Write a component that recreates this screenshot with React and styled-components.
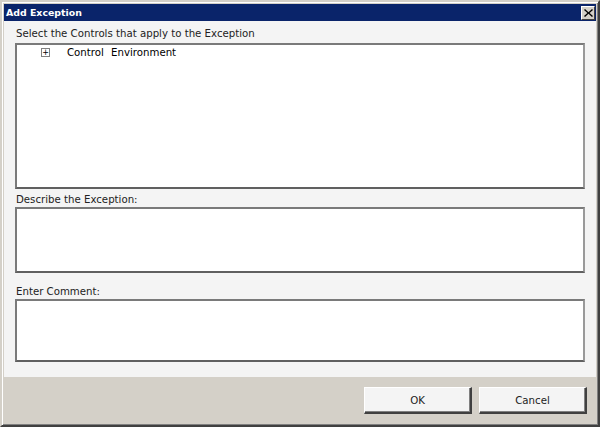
import React from "react";
import styled, { createGlobalStyle } from "styled-components";

const GlobalStyle = createGlobalStyle`
  html, body {
    margin: 0;
    padding: 0;
    background: #ffffff;
  }
  body {
    font-family: "DejaVu Sans", Tahoma, sans-serif;
    font-size: 10.2px;
    color: #000;
  }
`;

const App = () => {
  return (
    <>
      <GlobalStyle />
      <Window>
        <TitleBar>
          <Title>Add Exception</Title>
          <CloseButton aria-label="Close">
            <svg width="9" height="8" viewBox="0 0 9 8">
              <path d="M1 0 L4.5 3.2 L8 0 L9 1 L5.6 4 L9 7 L8 8 L4.5 4.8 L1 8 L0 7 L3.4 4 L0 1 Z" fill="#000" />
            </svg>
          </CloseButton>
        </TitleBar>
        <Body>
          <Label lh={10}>Select the Controls that apply to the Exception</Label>
          <Field height={146}>
            <TreeRow>
              <Expander>+</Expander>
              <TreeText>Control Environment</TreeText>
            </TreeRow>
          </Field>
          <Label top={4}>Describe the Exception:</Label>
          <Field height={66} />
          <Label top={12}>Enter Comment:</Label>
          <Field height={63} />
        </Body>
        <Footer>
          <Button>OK</Button>
          <Button>Cancel</Button>
        </Footer>
      </Window>
    </>
  );
};

export default App;

const Window = styled.div`
  width: 600px;
  height: 427px;
  box-sizing: border-box;
  border-top: 2px solid #d4d0c8;
  border-left: 2px solid #d4d0c8;
  border-right: 2px solid #404040;
  border-bottom: 2px solid #404040;
  box-shadow: inset 1px 1px 0 #ffffff, inset -1px -1px 0 #808080;
  background: #d4d0c8;
  padding: 2px;
  display: flex;
  flex-direction: column;
`;

const TitleBar = styled.div`
  height: 17px;
  background: #0a246a;
  display: flex;
  align-items: center;
  justify-content: space-between;
  padding: 0 1px 0 2px;
`;

const Title = styled.div`
  color: #ffffff;
  font-weight: bold;
  font-size: 9.4px;
`;

const CloseButton = styled.div`
  width: 14px;
  height: 14px;
  box-sizing: border-box;
  background: #d4d0c8;
  border-top: 1px solid #ffffff;
  border-left: 1px solid #ffffff;
  border-right: 1px solid #404040;
  border-bottom: 1px solid #404040;
  display: flex;
  align-items: center;
  justify-content: center;
`;

const Body = styled.div`
  background: #f4f4f4;
  height: 356px;
  box-sizing: border-box;
  padding: 8px 11px 0 11px;
  display: flex;
  flex-direction: column;
`;

const Label = styled.div`
  margin-top: ${(p) => p.top || 0}px;
  height: 14px;
  line-height: ${(p) => p.lh || 14}px;
  padding-left: 1px;
  color: #222;
`;

const Field = styled.div`
  height: ${(p) => p.height}px;
  flex-shrink: 0;
  background: #ffffff;
  border-top: 2px solid #7a7a7a;
  border-left: 2px solid #7a7a7a;
  border-right: 2px solid #9a9a9a;
  border-bottom: 2px solid #606060;
  box-sizing: border-box;
  width: 570px;
`;

const TreeRow = styled.div`
  display: flex;
  align-items: center;
  padding: 2px 0 0 24px;
`;

const Expander = styled.div`
  width: 7px;
  height: 7px;
  border: 1px solid #808080;
  font-size: 8px;
  line-height: 7px;
  text-align: center;
  color: #000;
  margin-right: 17px;
`;

const TreeText = styled.div`
  word-spacing: 4px;
`;

const Footer = styled.div`
  flex: 1;
  display: flex;
  justify-content: flex-end;
  align-items: flex-start;
  gap: 7px;
  padding: 10px 9px 0 0;
`;

const Button = styled.button`
  width: 108px;
  height: 27px;
  font-family: "DejaVu Sans", Tahoma, sans-serif;
  font-size: 10.2px;
  color: #222;
  background: #f4f4f4;
  border-top: 1px solid #ffffff;
  border-left: 1px solid #ffffff;
  border-right: 2px solid #404040;
  border-bottom: 2px solid #404040;
  box-shadow: inset -1px -1px 0 #808080;
  padding: 0;
`;
